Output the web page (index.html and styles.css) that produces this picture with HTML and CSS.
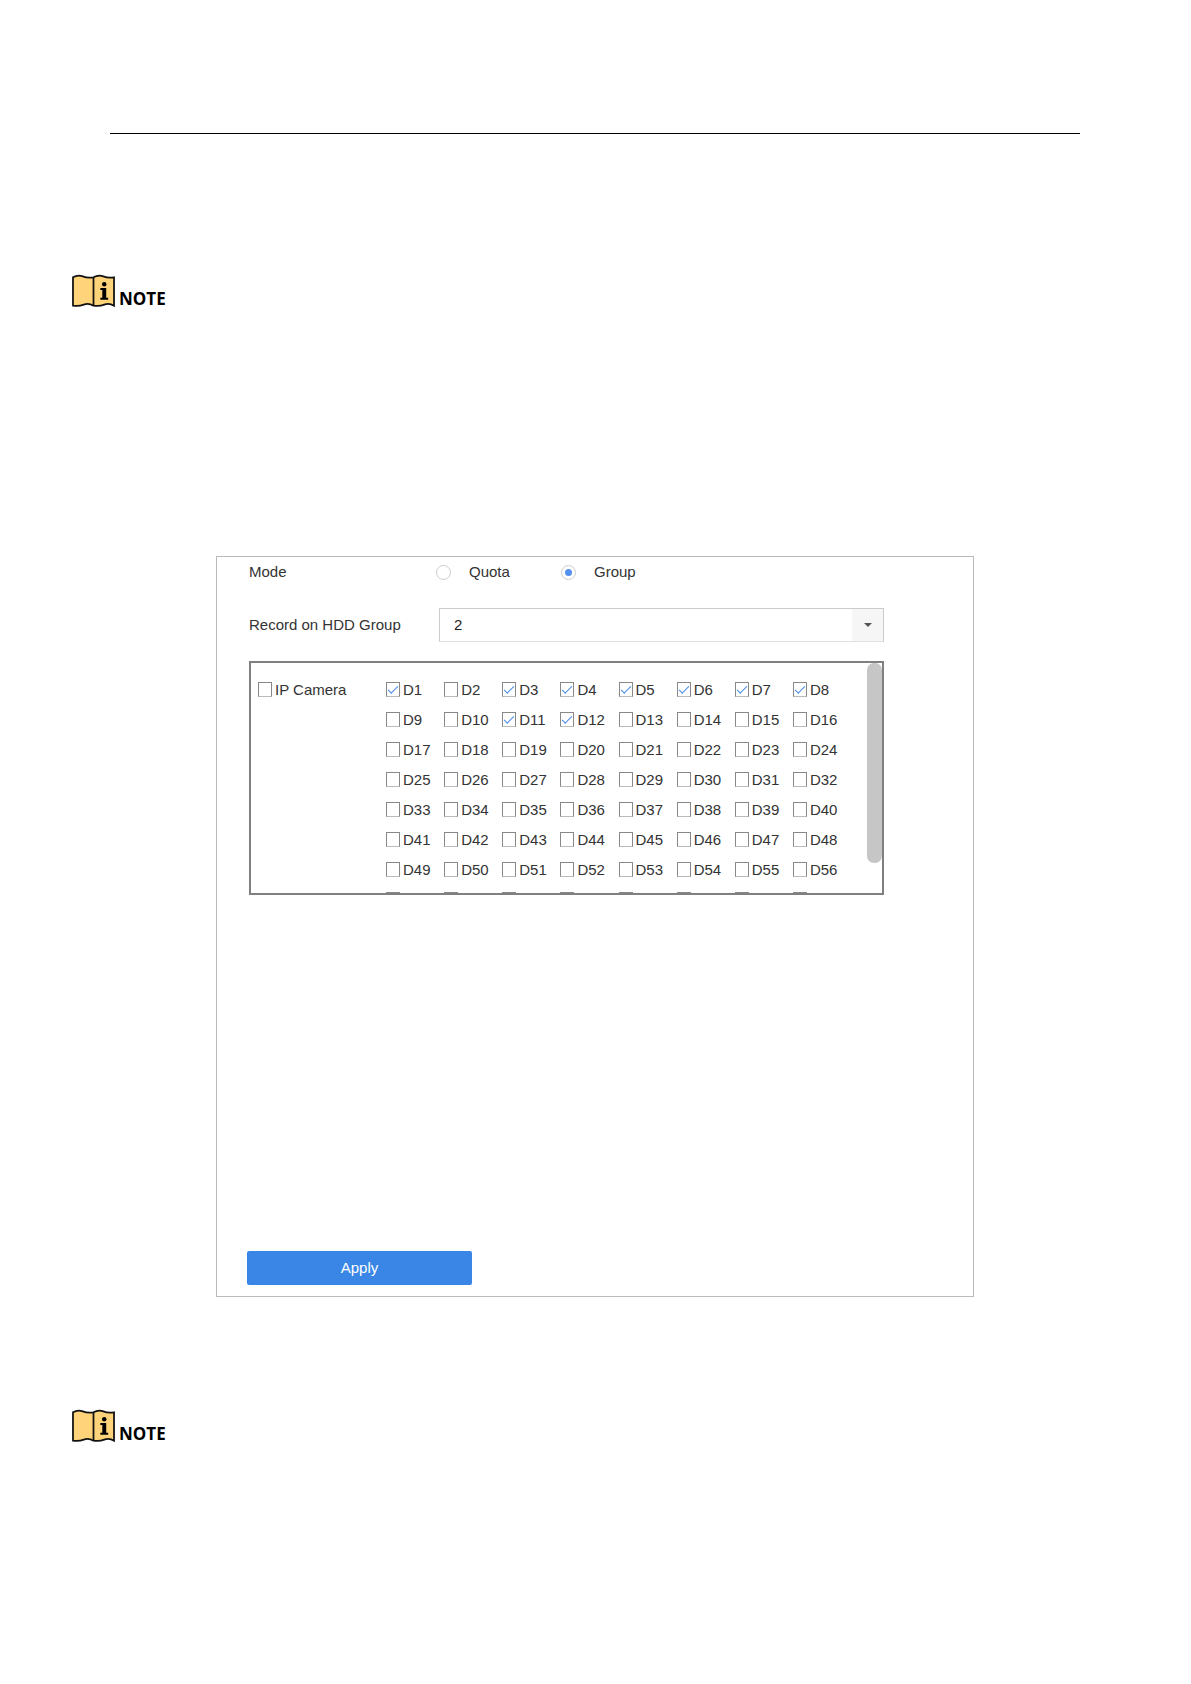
FILE: index.html
```html
<!DOCTYPE html>
<html lang="en">
<head>
    <meta charset="UTF-8">
    <meta name="viewport" content="width=device-width, initial-scale=1.0">
    <title>HDD Group</title>
    <link rel="stylesheet" href="styles.css">
</head>
<body>
    <hr class="rule">

    <div class="note">
        <svg class="note-icon" viewBox="0 0 44 34" aria-hidden="true">
            <path class="book" d="M1 3 Q6 0 11 2 T22 3 Q27 0 32 2 T43 3 V32 Q38 29 33 31 T22 32 Q17 29 12 31 T1 32 Z"/>
            <path class="book" d="M22 3 V32"/>
            <circle cx="33" cy="10" r="2.3"/>
            <path d="M29 14 H35 V24 H37 V26 H29 V24 H31 V16 H29 Z"/>
        </svg>
        <strong>NOTE</strong>
    </div>

    <form class="panel">
        <div class="row mode">
            <span class="row-label">Mode</span>
            <label class="radio"><input type="radio" name="mode" value="quota">Quota</label>
            <label class="radio"><input type="radio" name="mode" value="group" checked>Group</label>
        </div>

        <div class="row group">
            <label class="row-label" for="hdd-group">Record on HDD Group</label>
            <div class="select">
                <select id="hdd-group">
                    <option>1</option>
                    <option selected>2</option>
                    <option>3</option>
                </select>
                <span class="arrow"></span>
            </div>
        </div>

        <div class="list-box">
            <div class="list" id="list">
                <label class="check all"><input type="checkbox">IP Camera</label>
                <div class="cameras" id="cameras"></div>
            </div>
            <div class="thumb" id="thumb"></div>
        </div>

        <button type="button" class="apply-btn">Apply</button>
    </form>

    <div class="note">
        <svg class="note-icon" viewBox="0 0 44 34" aria-hidden="true">
            <path class="book" d="M1 3 Q6 0 11 2 T22 3 Q27 0 32 2 T43 3 V32 Q38 29 33 31 T22 32 Q17 29 12 31 T1 32 Z"/>
            <path class="book" d="M22 3 V32"/>
            <circle cx="33" cy="10" r="2.3"/>
            <path d="M29 14 H35 V24 H37 V26 H29 V24 H31 V16 H29 Z"/>
        </svg>
        <strong>NOTE</strong>
    </div>

    <script src="script.js"></script>
</body>
</html>
```

FILE: styles.css
```css
* {
    box-sizing: border-box;
}
body {
    margin: 0;
    padding: 133px 73px 232px 72px;
    background: white;
    color: #333;
    font-family: "Liberation Sans", Arial, sans-serif;
    font-size: 15px;
    line-height: 20px;
}
.rule {
    margin: 0 38px;
    border: none;
    border-top: 1px solid black;
}
.note {
    display: flex;
    align-items: flex-end;
    gap: 4px;
    margin-top: 140px;
    color: black;
    font-family: "Open Sans", sans-serif;
    font-size: 17px;
    line-height: 18px;
}
.note strong {
    font-weight: bold;
}
.note-icon {
    width: 43px;
    height: 34px;
}
.book {
    fill: #ffd37a;
    stroke: #111;
    stroke-width: 1.8;
}
.panel {
    max-width: 758px;
    margin: 248px auto 0;
    padding: 5px 89px 11px 32px;
    border: 1px solid #bbb;
}
.panel + .note {
    margin-top: 112px;
}
.row {
    display: flex;
    align-items: center;
}
.row-label {
    width: 190px;
}
.mode .row-label {
    width: 187px;
}
.radio {
    display: flex;
    align-items: center;
    gap: 18px;
    width: 125px;
}
input {
    appearance: none;
    flex: none;
    display: grid;
    place-items: center;
    margin: 0;
    background: white;
}
input[type="radio"] {
    width: 15px;
    height: 15px;
    border: 1px solid #ccc;
    border-radius: 50%;
}
input[type="radio"]:checked::before {
    content: "";
    width: 7px;
    height: 7px;
    border-radius: 50%;
    background: #5590f0;
}
.group {
    margin-top: 26px;
}
.select {
    position: relative;
    flex: 1;
}
select {
    appearance: none;
    display: block;
    width: 100%;
    height: 34px;
    padding: 0 14px;
    border: 1px solid #ccc;
    border-bottom-color: #e0e0e0;
    border-radius: 0;
    background: white;
    color: #222;
    font: inherit;
}
.arrow {
    position: absolute;
    top: 1px;
    right: 1px;
    bottom: 1px;
    width: 31px;
    display: grid;
    place-items: center;
    background: #f6f6f6;
    pointer-events: none;
}
.arrow::before {
    content: "";
    border: 4px solid transparent;
    border-top-color: #555;
    border-bottom: none;
}
.list-box {
    position: relative;
    margin-top: 19px;
    border: 2px solid #808080;
}
.list {
    display: flex;
    height: 230px;
    padding: 17px 31px 5px 7px;
    overflow-y: auto;
    scrollbar-width: none;
}
.thumb {
    position: absolute;
    top: 0;
    right: 0;
    width: 15px;
    height: 200px;
    border-radius: 7px;
    background: #c6c6c6;
}
.check {
    display: flex;
    align-items: center;
    gap: 3px;
    height: 19px;
    line-height: 19px;
}
.all {
    width: 128px;
}
.cameras {
    flex: 1;
    display: grid;
    grid-template-columns: repeat(8, 1fr);
    row-gap: 11px;
}
input[type="checkbox"] {
    width: 14px;
    height: 15px;
    border: 1px solid #888;
    border-bottom-color: #bbb;
}
input[type="checkbox"]:checked::before {
    content: "";
    width: 9px;
    height: 4px;
    margin-bottom: 3px;
    border-left: 1px solid #4a8ce8;
    border-bottom: 1px solid #4a8ce8;
    transform: rotate(-45deg);
}
.apply-btn {
    display: block;
    width: 225px;
    height: 34px;
    margin: 356px 0 0 -2px;
    border: none;
    border-radius: 2px;
    background: #3986e6;
    color: white;
    font: inherit;
    cursor: pointer;
}
.apply-btn:hover {
    background: #2b74d0;
}
```

FILE: script.js
```js
const selected = [1, 3, 4, 5, 6, 7, 8, 11, 12];
const list = document.getElementById("list");
const cameras = document.getElementById("cameras");
const thumb = document.getElementById("thumb");

for (let i = 1; i <= 64; i++) {
    const label = document.createElement("label");
    const box = document.createElement("input");
    label.className = "check";
    box.type = "checkbox";
    box.checked = selected.includes(i);
    label.append(box);
    if (i <= 56) {
        label.append(`D${i}`);
    } else {
        box.setAttribute("aria-label", `D${i}`);
    }
    cameras.appendChild(label);
}

document.querySelector(".all input").addEventListener("change", function () {
    cameras.querySelectorAll("input").forEach(box => {
        box.checked = this.checked;
    });
});

list.addEventListener("scroll", function () {
    const ratio = list.scrollTop / (list.scrollHeight - list.clientHeight);
    thumb.style.top = ratio * (list.clientHeight - thumb.offsetHeight) + "px";
});
```
